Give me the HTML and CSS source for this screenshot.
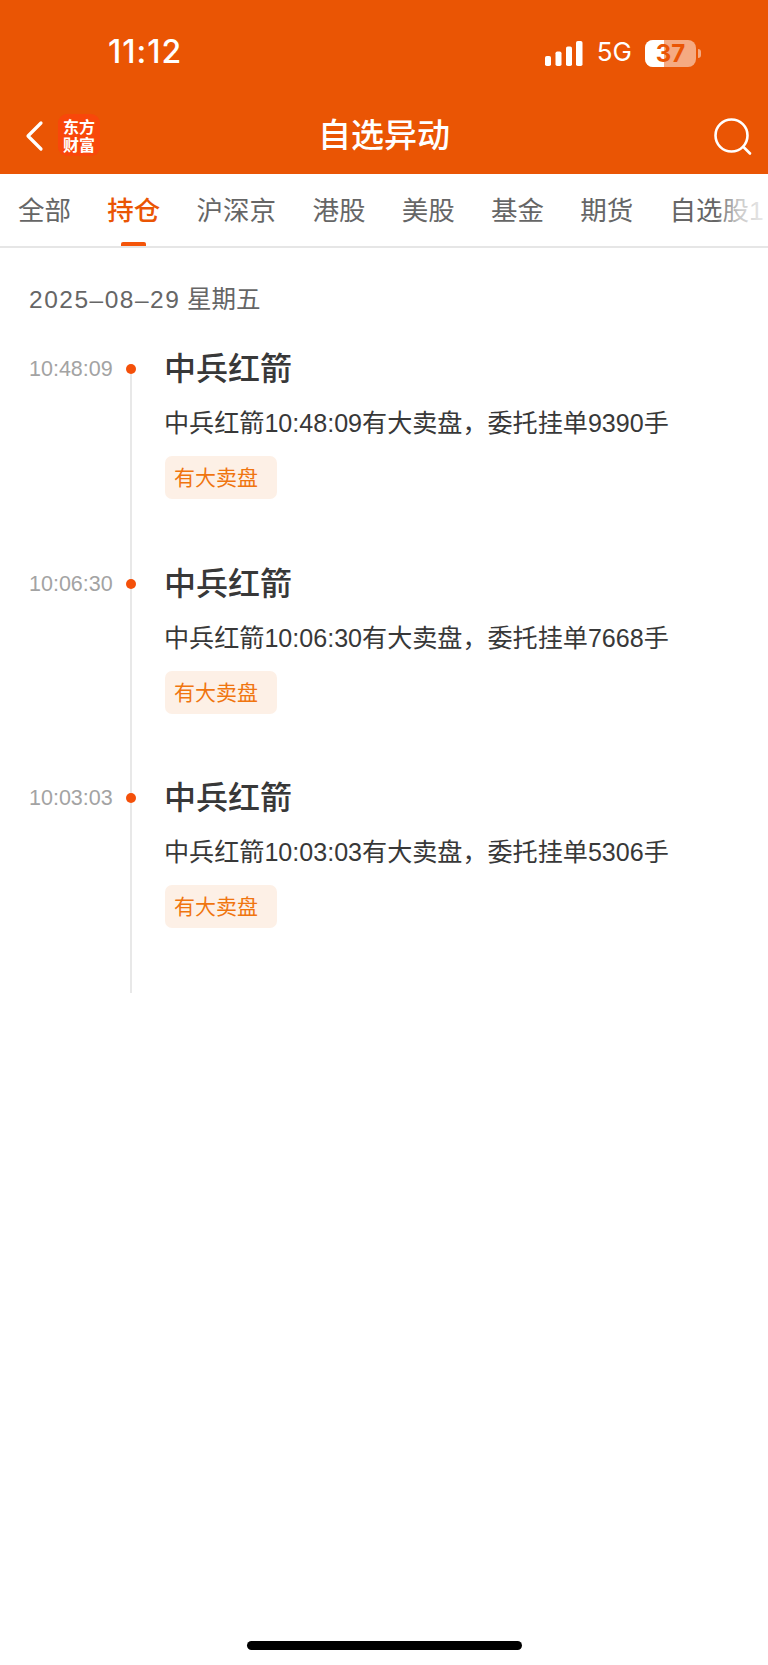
FILE: index.html

```html
<!DOCTYPE html>
<html lang="zh">
<head>
  <meta charset="utf-8">
  <title>自选异动</title>
  <meta name="viewport" content="width=device-width, initial-scale=1.0" />
  <link rel="stylesheet" href="styles.css">
</head>
<body>
  <div class="page">
    <header class="top">
      <div class="status">
        <span class="clock">11:12</span>
        <div class="status-right">
          <svg class="signal" width="40" height="25" viewBox="0 0 40 25" fill="#fff">
            <rect x="1" y="15" width="6" height="10" rx="1.8"/>
            <rect x="11.500" y="10.500" width="6" height="14.500" rx="1.8"/>
            <rect x="22" y="5.500" width="6" height="19.500" rx="1.8"/>
            <rect x="32" y="0" width="6.500" height="25" rx="1.8"/>
          </svg>
          <span class="net">5G</span>
          <div class="battery">
            <div class="battery-fill"></div>
            <span class="battery-num">37</span>
            <i class="battery-cap"></i>
          </div>
        </div>
      </div>
      <div class="nav">
        <div class="nav-left">
          <svg width="20" height="32" viewBox="0 0 20 32" fill="none" stroke="#fff" stroke-width="3.2" stroke-linecap="round" stroke-linejoin="round">
            <path d="M16 3 L3 16 L16 29"/>
          </svg>
          <div class="logo">东方财富</div>
        </div>
        <h1 class="nav-title">自选异动</h1>
        <svg class="search" width="40" height="40" viewBox="0 0 40 40" fill="none" stroke="#fff" stroke-width="2.600" stroke-linecap="round">
          <circle cx="18.500" cy="18.500" r="16"/>
          <path d="M30.500 30 L37 36.500"/>
        </svg>
      </div>
    </header>

    <nav class="tabs">
      <span class="tab">全部</span>
      <span class="tab active">持仓</span>
      <span class="tab">沪深京</span>
      <span class="tab">港股</span>
      <span class="tab">美股</span>
      <span class="tab">基金</span>
      <span class="tab">期货</span>
      <span class="tab">自选股1</span>
      <div class="tabs-fade"></div>
    </nav>

    <main class="list">
      <div class="date"><span class="date-num">2025–08–29</span> 星期五</div>

      <div class="timeline">
        <div class="entry">
          <div class="time">10:48:09</div>
          <div class="dot"></div>
          <div class="body">
            <div class="name">中兵红箭</div>
            <div class="desc">中兵红箭10:48:09有大卖盘，委托挂单9390手</div>
            <span class="tag">有大卖盘</span>
          </div>
        </div>
        <div class="entry">
          <div class="time">10:06:30</div>
          <div class="dot"></div>
          <div class="body">
            <div class="name">中兵红箭</div>
            <div class="desc">中兵红箭10:06:30有大卖盘，委托挂单7668手</div>
            <span class="tag">有大卖盘</span>
          </div>
        </div>
        <div class="entry">
          <div class="time">10:03:03</div>
          <div class="dot"></div>
          <div class="body">
            <div class="name">中兵红箭</div>
            <div class="desc">中兵红箭10:03:03有大卖盘，委托挂单5306手</div>
            <span class="tag">有大卖盘</span>
          </div>
        </div>
      </div>
    </main>

    <div class="home-bar"></div>
  </div>
</body>
</html>
```

FILE: styles.css

```css
* { box-sizing: border-box; }
body { margin: 0; background: #fff; font-family: "Liberation Sans", "Noto Sans CJK SC", sans-serif; }
.page { height: 1665px; display: flex; flex-direction: column; overflow: hidden; }

.top { background: #ea5504; height: 174px; color: #fff; }
.status { height: 104px; display: flex; justify-content: space-between; align-items: flex-start; padding: 33px 72px 0 108px; font-family: "Inter", sans-serif; }
.clock { font-size: 32px; line-height: 38px; font-weight: 500; letter-spacing: 1px; }
.status-right { display: flex; align-items: center; height: 38px; }
.signal { margin-top: 2px; margin-right: 13px; }
.net { font-size: 26px; line-height: 38px; margin-right: 13px; }
.battery { position: relative; width: 51px; height: 27px; border-radius: 8px; background: rgba(255,255,255,.5); margin-top: 2px; }
.battery-fill { width: 19px; height: 27px; background: #fff; border-radius: 8px 0 0 8px; }
.battery-num { position: absolute; left: 0; right: 0; top: 0; text-align: center; font-size: 24px; line-height: 27px; font-weight: 700; color: #ea5504; }
.battery-cap { position: absolute; left: 53px; top: 9px; width: 3px; height: 9px; background: rgba(255,255,255,.5); border-radius: 0 3px 3px 0; }

.nav { height: 70px; display: flex; align-items: center; justify-content: space-between; padding: 0 15px 0 25px; position: relative; }
.nav-left { display: flex; align-items: center; gap: 13px; margin-top: -6px; }
.logo { width: 42px; height: 42px; margin-top: -2px; border-radius: 9px; background: #f8470a; font-family: "Noto Sans CJK SC", sans-serif; font-size: 16px; line-height: 18px; font-weight: 700; text-align: center; padding: 3px 5px 0; }
.nav-title { position: absolute; left: 0; right: 0; top: 10px; margin: 0; text-align: center; font-size: 33px; line-height: 44px; font-weight: 500; }
.search { margin-top: -4px; }

.tabs { position: relative; height: 74px; display: flex; gap: 36.300px; padding: 1px 0 0 18px; border-bottom: 2px solid #e6e6e6; white-space: nowrap; overflow: hidden; }
.tab { position: relative; font-size: 26.500px; line-height: 72px; height: 71px; color: #666; }
.tab.active { color: #ea5504; font-weight: 500; }
.tab.active::after { content: ""; position: absolute; left: 14px; right: 14px; bottom: 0; height: 4px; border-radius: 2px 2px 0 0; background: #f4550a; }
.tabs-fade { position: absolute; right: 0; top: 0; bottom: 0; width: 52px; background: linear-gradient(to right, rgba(255,255,255,0), rgba(255,255,255,.65) 45%, rgba(255,255,255,.9)); }

.list { padding: 34px 0 0 29px; }
.date { font-size: 24.500px; line-height: 36px; color: #666; }
.date-num { letter-spacing: 1.500px; }

.timeline { margin-top: 31px; }
.entry { display: grid; grid-template-columns: 97px 39px 1fr; height: 214.500px; }
.time { font-size: 21.500px; line-height: 40px; color: #a3a3a3; }
.dot { position: relative; height: 100%; }
.dot::after { content: ""; position: absolute; left: 4px; top: 20px; bottom: -20px; width: 2px; background: #e8e8e8; }
.dot::before { content: ""; position: absolute; z-index: 1; left: 0; top: 15px; width: 10px; height: 10px; border-radius: 50%; background: #f4500a; }
.entry:last-child .dot::after { bottom: 0; }
.body { display: flex; flex-direction: column; align-items: flex-start; }
.name { font-size: 32px; line-height: 40px; font-weight: 500; color: #383838; margin-left: -1px; }
.desc { font-size: 25.100px; line-height: 36px; color: #383838; margin: 16px 0 0 -1px; }
.tag { margin-top: 15px; height: 43px; padding: 0 19px 0 9px; border-radius: 7px; background: #fdf0e6; color: #f0750f; font-size: 21px; line-height: 43px; }

.home-bar { margin: auto auto 15px; width: 275px; height: 9px; border-radius: 5px; background: #000; }
```
